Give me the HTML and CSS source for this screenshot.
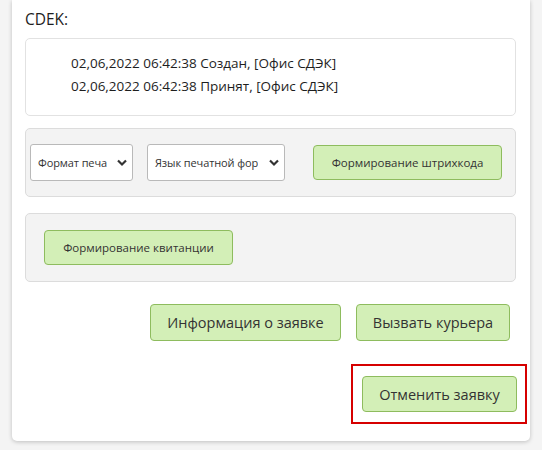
FILE: index.html
```html
<!DOCTYPE html>
<html lang="ru">
<head>
<meta charset="utf-8">
<link rel="stylesheet" href="styles.css">
</head>
<body>
<div class="card">
  <div class="title">CDEK:</div>
  <div class="history">
    <div class="hline">02,06,2022 06:42:38 Создан, [Офис СДЭК]</div>
    <div class="hline">02,06,2022 06:42:38 Принят, [Офис СДЭК]</div>
  </div>
  <div class="panel panel-print">
    <div class="select s1"><span class="stext">Формат печа</span><svg class="chev" viewBox="0 0 10 8" width="10" height="8"><path d="M1 1.5 L5 5.5 L9 1.5" fill="none" stroke="#333" stroke-width="2.2"/></svg></div>
    <div class="select s2"><span class="stext">Язык печатной фор</span><svg class="chev" viewBox="0 0 10 8" width="10" height="8"><path d="M1 1.5 L5 5.5 L9 1.5" fill="none" stroke="#333" stroke-width="2.2"/></svg></div>
    <button class="btn btn-small b-barcode">Формирование штрихкода</button>
  </div>
  <div class="panel panel-receipt">
    <button class="btn btn-small b-receipt">Формирование квитанции</button>
  </div>
  <div class="actions">
    <button class="btn btn-big b-info">Информация о заявке</button>
    <button class="btn btn-big b-courier">Вызвать курьера</button>
  </div>
  <div class="cancel-row">
    <div class="highlight">
      <button class="btn btn-big b-cancel">Отменить заявку</button>
    </div>
  </div>
</div>
</body>
</html>
```
FILE: styles.css
```css
* { box-sizing: border-box; }
body {
  margin: 0;
  background: #f4f4f4;
  font-family: "Open Sans", "Noto Sans", sans-serif;
  color: #222;
  height: 450px;
  overflow: hidden;
}
.card {
  margin: 0 12px;
  width: 518px;
  background: #fff;
  border-radius: 0 0 5px 5px;
  box-shadow: 0 1px 4px rgba(0,0,0,0.22);
  padding: 9px 14px 17px 13px;
}
.title {
  font-size: 15.5px;
  line-height: 20px;
  color: #1e1e1e;
}
.history {
  margin-top: 9px;
  height: 78px;
  border: 1px solid #e2e2e2;
  border-radius: 5px;
  padding: 13px 0 0 45px;
}
.hline {
  font-size: 13.5px;
  line-height: 23px;
  color: #1e1e1e;
}
.panel {
  background: #f3f3f3;
  border: 1px solid #dcdcdc;
  border-radius: 5px;
  height: 69px;
  display: flex;
  align-items: center;
}
.panel-print {
  margin-top: 12px;
  padding-left: 4px;
}
.panel-receipt {
  margin-top: 16px;
  padding-left: 18px;
}
.select {
  height: 37px;
  background: #fff;
  border: 1px solid #b9b9b9;
  border-radius: 3px;
  display: flex;
  align-items: center;
  justify-content: space-between;
  padding: 0 5px 0 7px;
  font-size: 11px;
  color: #333;
  white-space: nowrap;
  overflow: hidden;
}
.s1 { width: 103px; }
.s2 { width: 138px; margin-left: 14px; }
.stext { overflow: hidden; letter-spacing: -0.1px; }
.chev { flex: none; margin-left: 3px; }
.btn {
  background: #d3efb7;
  border: 1px solid #8ebc5e;
  border-radius: 4px;
  color: #333;
  font-family: inherit;
  padding: 0;
  cursor: pointer;
}
.btn-small {
  font-size: 11.5px;
  height: 35px;
}
.b-barcode { width: 189px; margin-left: 28px; }
.b-receipt { width: 189px; }
.actions {
  margin-top: 22px;
  display: flex;
  justify-content: flex-end;
  gap: 15px;
  padding-right: 6px;
}
.btn-big {
  font-size: 14.5px;
  height: 37px;
}
.b-info { width: 191px; }
.b-courier { width: 154px; }
.cancel-row {
  margin-top: 23px;
  display: flex;
  justify-content: flex-end;
  margin-right: -11px;
}
.highlight {
  border: 2px solid #d60000;
  padding: 10px 8px 10px 9px;
}
.b-cancel { width: 155px; height: 36px; }
```
